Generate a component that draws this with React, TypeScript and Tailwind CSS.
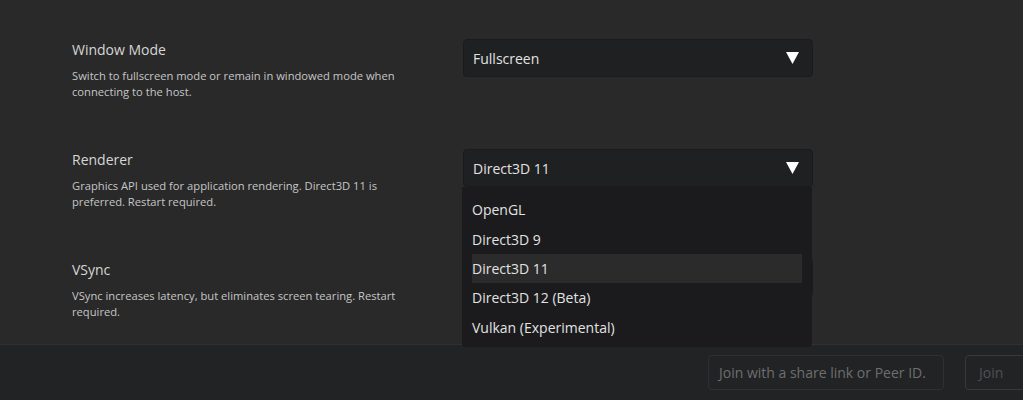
import React from "react"

const font = { fontFamily: '"Open Sans", "Noto Sans", sans-serif' }

const Arrow = () => (
  <svg width="13" height="12" viewBox="0 0 13 12" className="shrink-0">
    <path d="M0 0 H13 L6.5 12 Z" fill="#ffffff" />
  </svg>
)

const Select = ({ value, children }: { value: string; children?: React.ReactNode }) => (
  <div className="relative w-[350px] shrink-0">
    <div className="h-[38px] flex items-center justify-between pl-[9px] pr-[13px] bg-[#1f2022] border border-[#1b1b1c] rounded-[4px]">
      <span className="text-[14px] text-[#e2e2e2]">{value}</span>
      <Arrow />
    </div>
    {children}
  </div>
)

const Row = ({
  label,
  desc,
  value,
  children,
}: {
  label: string
  desc: string
  value: string
  children?: React.ReactNode
}) => (
  <div className="flex items-start h-[110px]">
    <div className="w-[391px] shrink-0 pt-[1px] pr-[50px]">
      <div className="text-[14px] leading-[20px] text-[#d6d6d6]">{label}</div>
      <div className="mt-[8px] text-[11.2px] leading-[16px] text-[#c6c6c6]">{desc}</div>
    </div>
    <Select value={value}>{children}</Select>
  </div>
)

const options = ["OpenGL", "Direct3D 9", "Direct3D 11", "Direct3D 12 (Beta)", "Vulkan (Experimental)"]

export default function App() {
  return (
    <div className="w-[1023px] h-[400px] overflow-hidden flex flex-col bg-[#292929]" style={font}>
      <div className="flex-1 min-h-0 pl-[72px] pt-[39px] border-b border-[#303030] overflow-visible">
        <Row
          label="Window Mode"
          desc="Switch to fullscreen mode or remain in windowed mode when connecting to the host."
          value="Fullscreen"
        />
        <div className="relative z-10">
          <Row
            label="Renderer"
            desc="Graphics API used for application rendering. Direct3D 11 is preferred. Restart required."
            value="Direct3D 11"
          >
            <div className="absolute left-[-1px] top-[38px] w-[350px] bg-[#1b1b1d] rounded-b-[4px] pt-[8px] pb-[5px] px-[10px]">
              {options.map((o) => (
                <div
                  key={o}
                  className={`h-[29.4px] flex items-center text-[14px] text-[#e2e2e2] ${
                    o === "Direct3D 11" ? "bg-[#2b2b2b]" : ""
                  }`}
                >
                  {o}
                </div>
              ))}
            </div>
          </Row>
        </div>
        <Row
          label="VSync"
          desc="VSync increases latency, but eliminates screen tearing. Restart required."
          value=""
        />
      </div>
      <div className="h-[55px] shrink-0 bg-[#222325] flex items-center justify-end gap-[21px] mr-[-20px] relative z-0">
        <div className="w-[236px] h-[35px] flex items-center px-[10px] border border-[#2f3032] rounded-[4px] text-[14px] text-[#6e6e6e]">
          Join with a share link or Peer ID.
        </div>
        <div className="w-[78px] h-[35px] flex items-center px-[13px] border border-[#38393b] rounded-[4px] text-[14px] text-[#4f5053]">
          Join
        </div>
      </div>
    </div>
  )
}
